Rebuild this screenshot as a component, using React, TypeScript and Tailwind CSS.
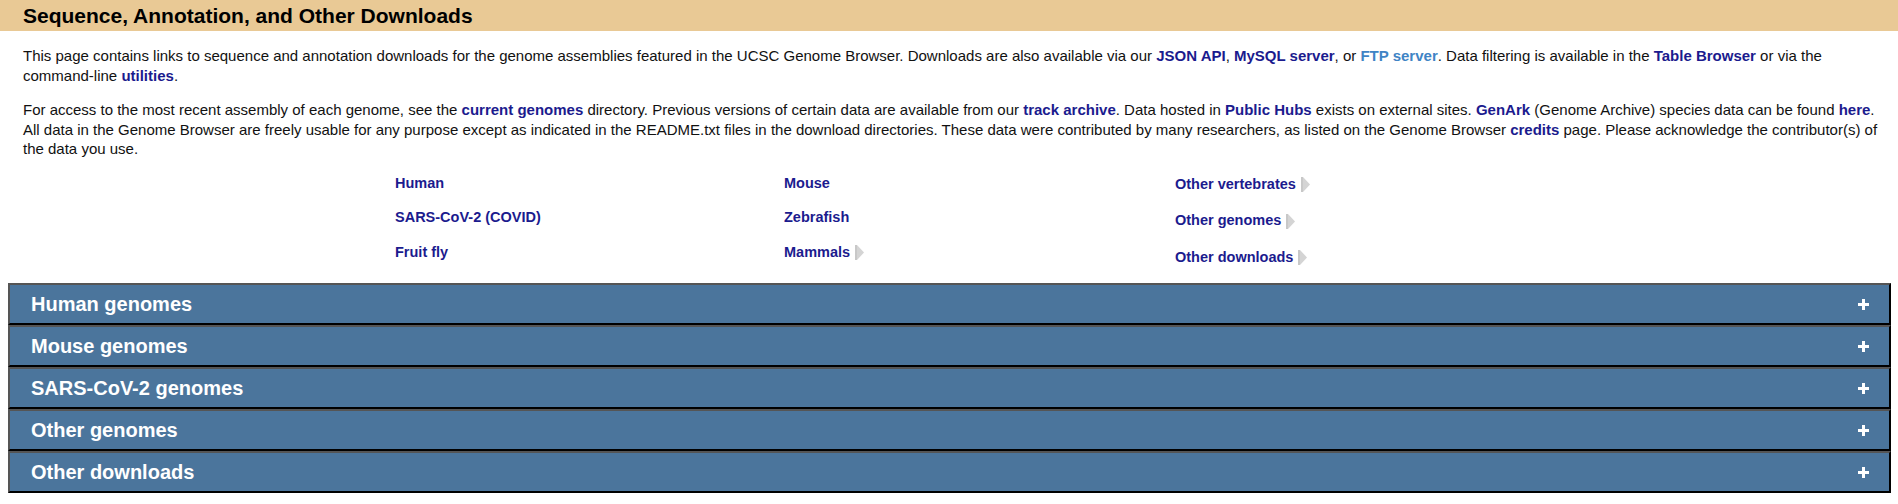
import React from "react";

const Arrow = () => (
  <svg width="9" height="15" viewBox="0 0 9 15" className="ml-[5px] inline-block align-middle">
    <polygon points="0,0 2,0 9,7.5 2,15 0,15" fill="#d4d4d4" />
    <polygon points="0,0 2,0 2,15 0,15" fill="#c8c8c8" />
  </svg>
);

const L = ({ children, light }: { children: React.ReactNode; light?: boolean }) => (
  <a className={light ? "font-bold text-[#3f84c5]" : "font-bold text-[#1b1b8e]"} href="#">
    {children}
  </a>
);

const Plus = () => (
  <svg width="11" height="11" viewBox="0 0 11 11">
    <rect x="4" y="0" width="3" height="11" fill="#fff" />
    <rect x="0" y="4" width="11" height="3" fill="#fff" />
  </svg>
);

export default function App() {
  const col1 = ["Human", "SARS-CoV-2 (COVID)", "Fruit fly"];
  const col2: [string, boolean][] = [["Mouse", false], ["Zebrafish", false], ["Mammals", true]];
  const col3 = ["Other vertebrates", "Other genomes", "Other downloads"];
  const bars = ["Human genomes", "Mouse genomes", "SARS-CoV-2 genomes", "Other genomes", "Other downloads"];
  return (
    <div className="w-[1898px] min-h-[504px] bg-white text-black" style={{ fontFamily: '"Liberation Sans", Arial, sans-serif' }}>
      <div className="h-[31px] bg-[#e9c995] pl-[23px] text-[21px] font-bold leading-[31px] text-black">
        Sequence, Annotation, and Other Downloads
      </div>
      <div className="pl-[23px] pr-[19px] text-[15px] leading-[19.5px] text-[#111]">
        <p className="mt-[15px]">
          This page contains links to sequence and annotation downloads for the genome assemblies featured in the UCSC Genome Browser. Downloads are also available via our <L>JSON API</L>, <L>MySQL server</L>, or <L light>FTP server</L>. Data filtering is available in the <L>Table Browser</L> or via the command-line <L>utilities</L>.
        </p>
        <p className="mt-[15px]">
          For access to the most recent assembly of each genome, see the <L>current genomes</L> directory. Previous versions of certain data are available from our <L>track archive</L>. Data hosted in <L>Public Hubs</L> exists on external sites. <L>GenArk</L> (Genome Archive) species data can be found <L>here</L>. All data in the Genome Browser are freely usable for any purpose except as indicated in the README.txt files in the download directories. These data were contributed by many researchers, as listed on the Genome Browser <L>credits</L> page. Please acknowledge the contributor(s) of the data you use.
        </p>
      </div>
      <div className="mt-[8px] ml-[395px] flex text-[14.5px] font-bold text-[#1b1b8e]">
        <div className="flex w-[389px] flex-col">
          {col1.map((t) => (
            <div key={t} className="flex h-[34.5px] items-center">{t}</div>
          ))}
        </div>
        <div className="flex w-[391px] flex-col">
          {col2.map(([t, a]) => (
            <div key={t} className="flex h-[34.5px] items-center">
              {t}
              {a && <Arrow />}
            </div>
          ))}
        </div>
        <div className="flex flex-col">
          {col3.map((t) => (
            <div key={t} className="flex h-[36.5px] items-center">
              {t}
              <Arrow />
            </div>
          ))}
        </div>
      </div>
      <div className="mt-[7px] flex flex-col pl-[8px] pr-[7px]">
        {bars.map((b) => (
          <div
            key={b}
            className="flex h-[42px] items-center justify-between border-2 border-t-[#555] border-l-[#555] border-b-black border-r-black bg-[#4b759c] pl-[21px] pr-[20px] text-[20px] font-bold text-white"
          >
            <span>{b}</span>
            <Plus />
          </div>
        ))}
      </div>
    </div>
  );
}
